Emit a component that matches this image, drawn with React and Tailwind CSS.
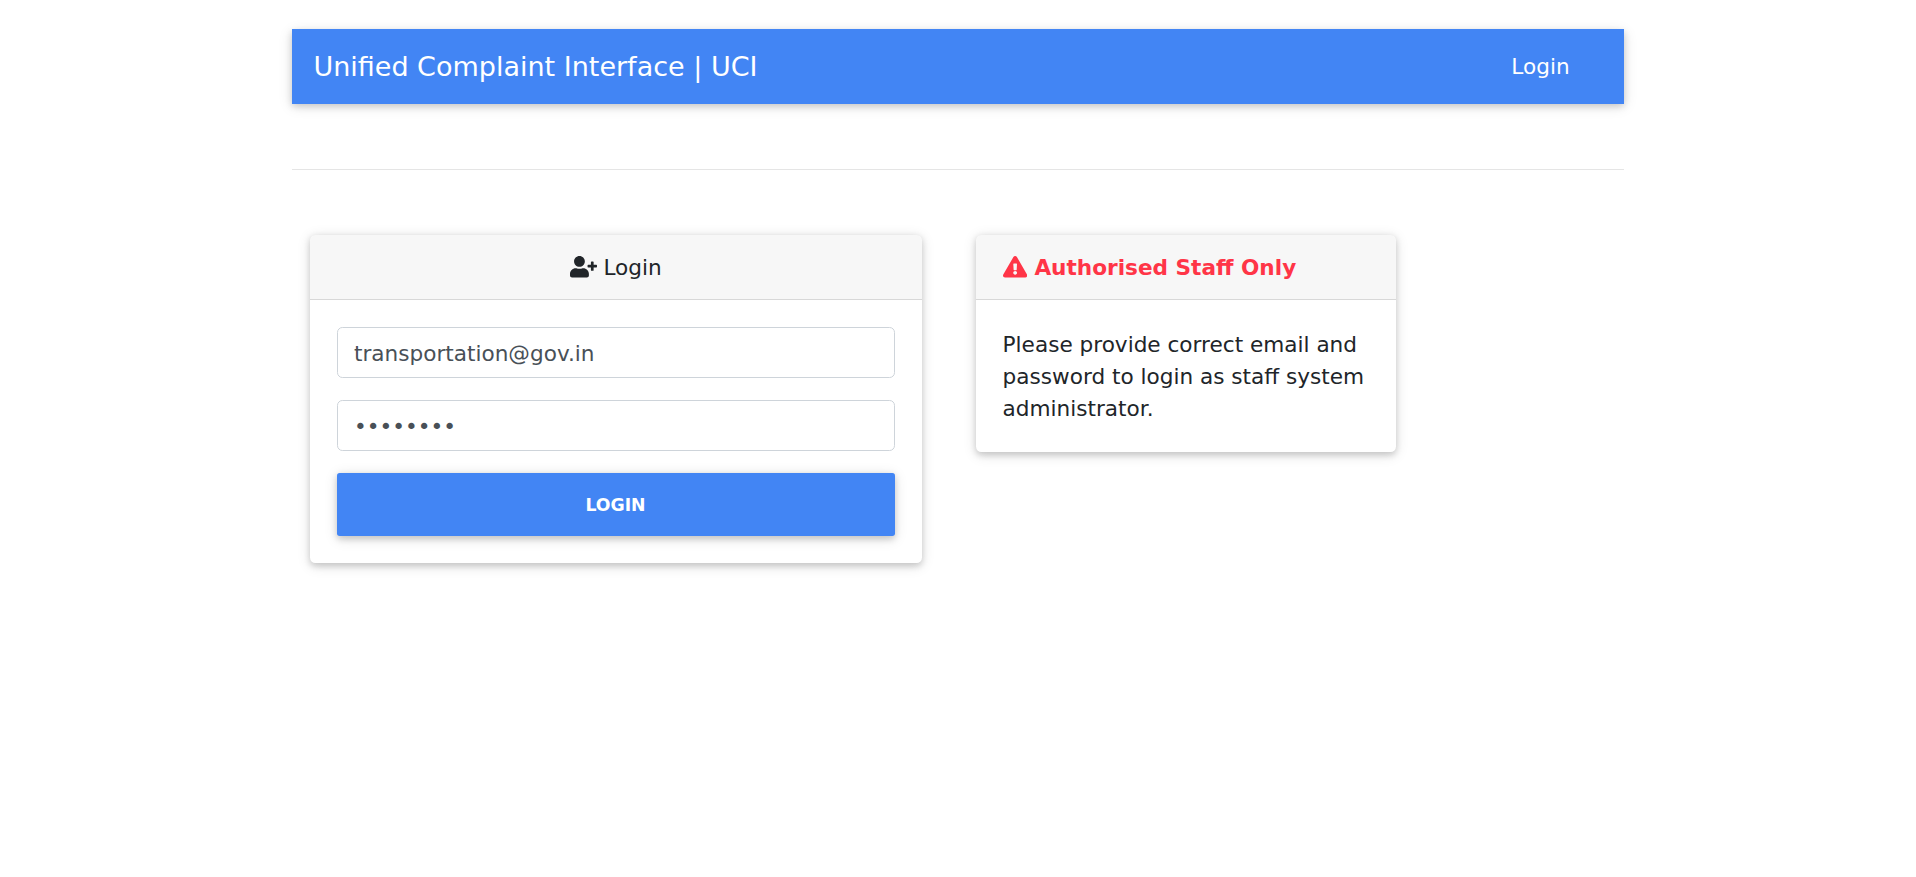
import { FaUserPlus, FaExclamationTriangle } from "react-icons/fa";

const raised = "shadow-[0_2.7px_6.75px_rgba(0,0,0,0.16),0_2.7px_13.5px_rgba(0,0,0,0.12)]";
const field =
  "block h-[51px] w-full rounded-[5.4px] border border-[#ced4da] bg-white px-4 pt-px text-[21.6px] text-[#495057] outline-none";

function Card({ className, header, children }) {
  return (
    <section className={`rounded-[5.4px] bg-white ${raised} ${className}`}>
      <header className="h-[65px] rounded-t-[5.4px] border-b border-black/[0.125] bg-black/[0.03] px-[26.6px] pt-[17px]">
        {header}
      </header>
      {children}
    </section>
  );
}

export default function App() {
  return (
    <div className="min-h-screen bg-white font-['DejaVu_Sans',sans-serif] text-[21.6px] leading-8 text-[#212529]">
      <main className="mx-auto w-[1332px] pt-[29px]">
        <nav className={`flex h-[75px] items-center justify-between bg-[#4285f4] pt-px pr-[54.4px] pl-[21.4px] text-white ${raised}`}>
          <a href="#" className="text-[27px] leading-10">Unified Complaint Interface | UCI</a>
          <a href="#">Login</a>
        </nav>
        <hr className="mt-[65px] border-t border-black/10" />
        <div className="mt-[65px] flex items-start gap-[54px] pl-[18px]">
          <Card
            className="w-[612px]"
            header={
              <h1 className="pr-[0.8px] text-center">
                <FaUserPlus className="inline-block h-[21.6px] w-[27px] align-[-2.7px]" /> Login
              </h1>
            }
          >
            <form className="flex flex-col gap-[22px] px-[27px] py-[27px]" onSubmit={(e) => e.preventDefault()}>
              <input type="email" defaultValue="transportation@gov.in" className={field} />
              <input type="password" defaultValue="password" className={field} />
              <button className={`h-[63px] w-full rounded-[2.7px] bg-[#4285f4] pt-px pr-px text-[17.28px] font-bold text-white uppercase ${raised}`}>
                Login
              </button>
            </form>
          </Card>
          <Card
            className="w-[420px]"
            header={
              <h2 className="font-bold text-[#ff3547]">
                <FaExclamationTriangle className="inline-block h-[21.6px] w-[24.3px] align-[-2.7px]" /> Authorised Staff Only
              </h2>
            }
          >
            <p className="px-[26.6px] pt-[29px] pb-[27px]">
              Please provide correct email and password to login as staff system administrator.
            </p>
          </Card>
        </div>
      </main>
    </div>
  );
}
